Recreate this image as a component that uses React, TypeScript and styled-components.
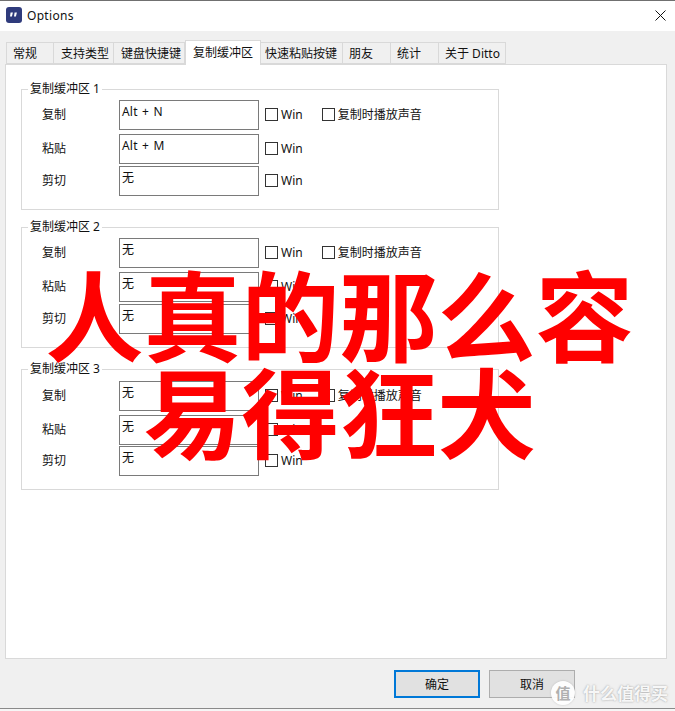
import React from "react";
import styled, { createGlobalStyle } from "styled-components";

const Global = createGlobalStyle`
  html, body { margin: 0; padding: 0; background: #f0f0f0; }
  body { font-family: "Noto Sans", "Noto Sans CJK SC", sans-serif; font-size: 12px; color: #111; }
  * { box-sizing: border-box; }
`;

const Window = styled.div`
  position: relative;
  width: 675px;
  height: 711px;
  overflow: hidden;
  display: flex;
  flex-direction: column;
  background: #f0f0f0;
  border-top: 1px solid #707070;
`;

const TitleBar = styled.div`
  height: 30px;
  background: #fff;
  display: flex;
  align-items: center;
  padding: 0 9px 2px 6px;
  flex: none;
`;

const AppTitle = styled.span`
  margin-left: 5px;
  font-size: 12px;
  letter-spacing: 0.3px;
  flex: 1;
`;

const Body = styled.div`
  flex: 1;
  display: flex;
  flex-direction: column;
  padding: 11px 8px 0 5px;
`;

const TabBar = styled.div`
  display: flex;
  height: 22px;
  padding-left: 2px;
  flex: none;
  align-items: flex-end;
`;

const Tab = styled.div<{ $w: number; $pad: number; $active?: boolean }>`
  width: ${(p) => p.$w}px;
  height: ${(p) => (p.$active ? 25 : 22)}px;
  margin-bottom: ${(p) => (p.$active ? -1 : 0)}px;
  margin-left: ${(p) => (p.$active ? 0 : -1)}px;
  background: ${(p) => (p.$active ? "#fff" : "#f0f0f0")};
  border: 1px solid #d9d9d9;
  border-bottom: ${(p) => (p.$active ? "none" : "1px solid #d9d9d9")};
  display: flex;
  align-items: ${(p) => (p.$active ? "flex-start" : "center")};
  padding: ${(p) => (p.$active ? 2 : 0)}px 0 0 ${(p) => p.$pad}px;
  position: relative;
  z-index: ${(p) => (p.$active ? 2 : 1)};
  white-space: nowrap;
`;

const Panel = styled.div`
  width: 662px;
  height: 595px;
  background: #fff;
  border: 1px solid #d9d9d9;
  padding: 24px 0 0 15px;
  flex: none;
`;

const Group = styled.div<{ $gap: number }>`
  width: 478px;
  height: 121px;
  border: 1px solid #d9d9d9;
  margin-bottom: ${(p) => p.$gap}px;
`;

const Legend = styled.div`
  width: fit-content;
  height: 16px;
  line-height: 16px;
  margin: -9px 0 0 6px;
  padding: 0 2px;
  background: #fff;
  white-space: nowrap;
`;

const Rows = styled.div<{ $top: number }>`
  margin-top: ${(p) => p.$top}px;
`;

const Row = styled.div<{ $gap: number }>`
  display: flex;
  align-items: center;
  height: 30px;
  padding-left: 20px;
  margin-bottom: ${(p) => p.$gap}px;
`;

const RowLabel = styled.span`
  width: 77px;
  flex: none;
  margin-bottom: 2px;
`;

const Field = styled.div`
  width: 140px;
  height: 30px;
  border: 1px solid #7a7a7a;
  background: #fff;
  padding: 3px 2px;
  line-height: 16px;
  flex: none;
  letter-spacing: 0.2px;
  word-spacing: 1px;
`;

const Check = styled.label<{ $left: number }>`
  display: flex;
  align-items: center;
  margin: 0 0 2px ${(p) => p.$left}px;
  gap: 3px;
  white-space: nowrap;
`;

const Box = styled.span`
  width: 13px;
  height: 13px;
  border: 1px solid #333;
  background: #fff;
  flex: none;
`;

const Footer = styled.div`
  display: flex;
  justify-content: flex-end;
  gap: 9px;
  padding: 11px 92px 0 0;
  margin-right: -92px;
  width: 662px;
`;

const Button = styled.div<{ $primary?: boolean }>`
  width: 86px;
  height: 28px;
  background: #e1e1e1;
  border: ${(p) => (p.$primary ? "2px solid #0078d7" : "1px solid #adadad")};
  display: flex;
  align-items: center;
  justify-content: center;
`;

const BottomEdge = styled.div`
  height: 3px;
  background: #f6f6f6;
  border-top: 1px solid #8a8a8a;
  flex: none;
`;

const Headline = styled.div`
  position: absolute;
  left: 2px;
  top: 262px;
  width: 675px;
  text-align: center;
  color: #ff0000;
  font-family: "Noto Sans CJK SC", sans-serif;
  font-weight: 700;
  font-size: 98px;
  line-height: 97px;
  pointer-events: none;
`;

const Watermark = styled.div`
  position: absolute;
  left: 551px;
  top: 679px;
  display: flex;
  align-items: center;
  gap: 8px;
  color: rgba(255, 255, 255, 0.92);
  font-family: "Noto Sans CJK SC", sans-serif;
  font-size: 17px;
  font-weight: 700;
  white-space: nowrap;
  text-shadow: 0 0 2px rgba(90, 90, 90, 0.6);
`;

const Seal = styled.span`
  width: 24px;
  height: 24px;
  border-radius: 50%;
  background: rgba(255, 255, 255, 0.92);
  box-shadow: 0 0 2px rgba(120, 120, 120, 0.4);
  color: #b0b0b0;
  font-size: 15px;
  text-shadow: none;
  display: flex;
  align-items: center;
  justify-content: center;
`;

const tabs: { name: string; w: number; pad: number; active?: boolean }[] = [
  { name: "常规", w: 48, pad: 6 },
  { name: "支持类型", w: 61, pad: 7 },
  { name: "键盘快捷键", w: 72, pad: 7 },
  { name: "复制缓冲区", w: 76, pad: 7, active: true },
  { name: "快速粘贴按键", w: 83, pad: 4 },
  { name: "朋友", w: 49, pad: 6 },
  { name: "统计", w: 49, pad: 6 },
  { name: "关于 Ditto", w: 68, pad: 6 },
];

const groups = [
  { title: "复制缓冲区 1", keys: ["Alt + N", "Alt + M", "无"], top: 3, last: 2, after: 17 },
  { title: "复制缓冲区 2", keys: ["无", "无", "无"], top: 3, last: 2, after: 21 },
  { title: "复制缓冲区 3", keys: ["无", "无", "无"], top: 4, last: 1, after: 0 },
];
const labels = ["复制", "粘贴", "剪切"];

export default function App() {
  return (
    <Window>
      <Global />
      <TitleBar>
        <svg width="16" height="16" viewBox="0 0 16 16">
          <rect width="16" height="16" rx="3" fill="#2f3b7c" />
          <path d="M4.600 5.500h2.300L5.900 9.600H4zM8.600 5.500h2.300L9.900 9.600H8z" fill="#fff" />
        </svg>
        <AppTitle>Options</AppTitle>
        <svg width="11" height="11" viewBox="0 0 11 11">
          <path d="M0.500 0.500L10.500 10.500M10.500 0.500L0.500 10.500" stroke="#111" strokeWidth="1" fill="none" />
        </svg>
      </TitleBar>
      <Body>
        <TabBar>
          {tabs.map((t) => (
            <Tab key={t.name} $w={t.w} $pad={t.pad} $active={t.active}>
              {t.name}
            </Tab>
          ))}
        </TabBar>
        <Panel>
          {groups.map((g) => (
            <Group key={g.title} $gap={g.after}>
              <Legend>{g.title}</Legend>
              <Rows $top={g.top}>
                {g.keys.map((k, i) => (
                  <Row key={i} $gap={i === 0 ? 4 : g.last}>
                    <RowLabel>{labels[i]}</RowLabel>
                    <Field>{k}</Field>
                    <Check $left={6}>
                      <Box />
                      Win
                    </Check>
                    {i === 0 && (
                      <Check $left={19}>
                        <Box />
                        复制时播放声音
                      </Check>
                    )}
                  </Row>
                ))}
              </Rows>
            </Group>
          ))}
        </Panel>
        <Footer>
          <Button $primary>确定</Button>
          <Button>取消</Button>
        </Footer>
      </Body>
      <BottomEdge />
      <Headline>
        人真的那么容
        <br />
        易得狂犬
      </Headline>
      <Watermark>
        <Seal>值</Seal>
        什么值得买
      </Watermark>
    </Window>
  );
}
